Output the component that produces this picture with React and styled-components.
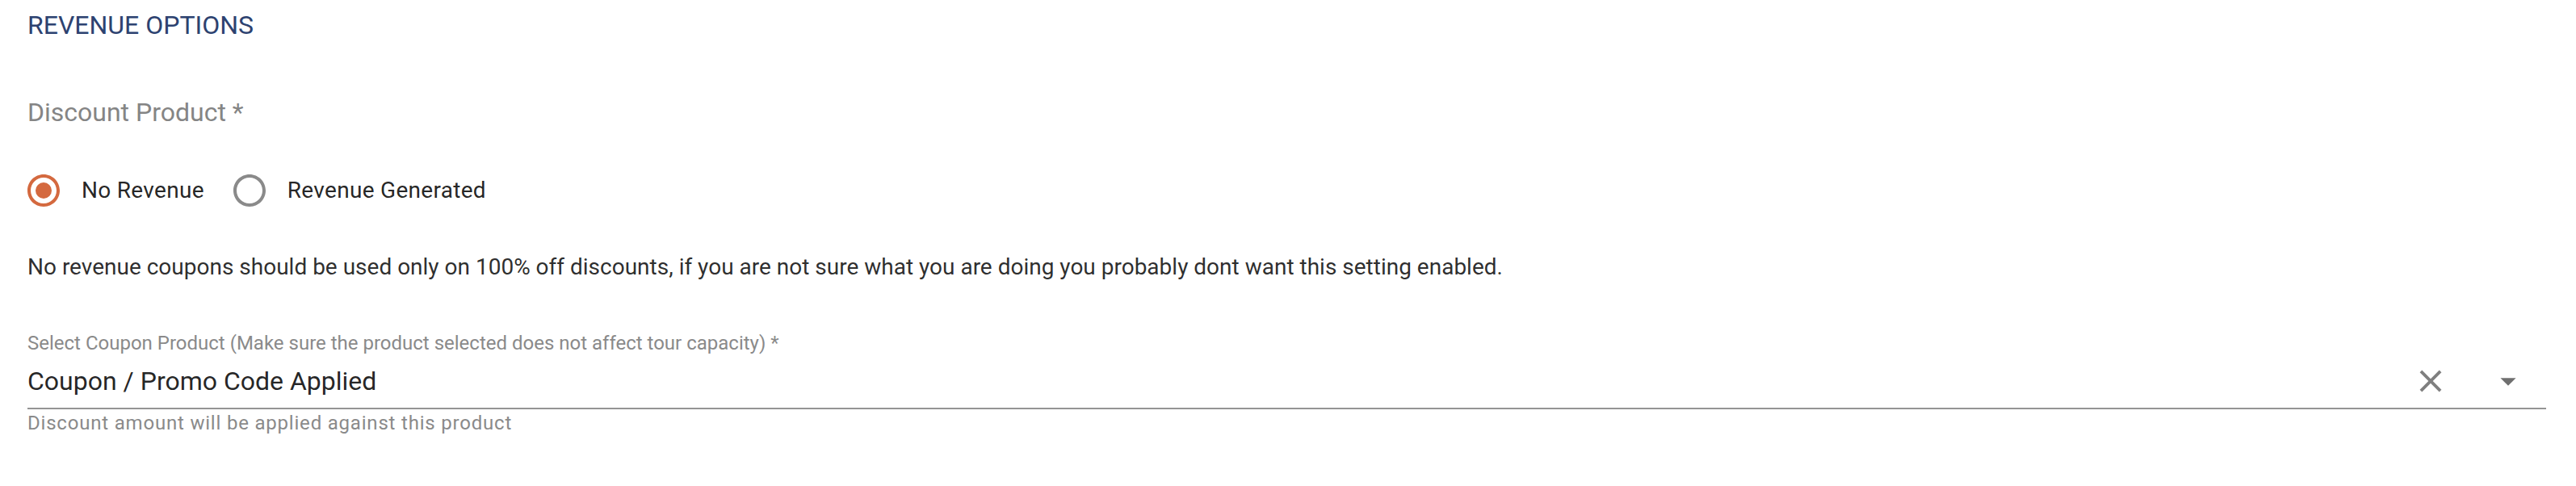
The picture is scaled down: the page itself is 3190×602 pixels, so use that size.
import React, { useState } from "react";
import styled, { createGlobalStyle } from "styled-components";

const GlobalStyle = createGlobalStyle`
  html, body {
    margin: 0;
    padding: 0;
    background: #ffffff;
  }
  body {
    font-family: Roboto, "Liberation Sans", Arial, sans-serif;
    -webkit-font-smoothing: antialiased;
  }
`;

const options = [
  { value: "none", label: "No Revenue" },
  { value: "generated", label: "Revenue Generated" },
];

const RadioIcon = ({ checked }) => (
  <svg width="48" height="48" viewBox="0 0 24 24" fill="currentColor">
    <path d="M12 2C6.48 2 2 6.48 2 12s4.48 10 10 10 10-4.48 10-10S17.52 2 12 2zm0 18c-4.42 0-8-3.58-8-8s3.58-8 8-8 8 3.58 8 8-3.58 8-8 8z" />
    {checked && <circle cx="12" cy="12" r="5" />}
  </svg>
);

const CloseIcon = () => (
  <svg width="46" height="46" viewBox="0 0 24 24" fill="currentColor">
    <path d="M19 6.41L17.59 5 12 10.59 6.41 5 5 6.41 10.59 12 5 17.59 6.41 19 12 13.41 17.59 19 19 17.59 13.41 12z" />
  </svg>
);

const ArrowDropDown = () => (
  <svg width="46" height="46" viewBox="0 0 24 24" fill="currentColor">
    <path d="M7 10l5 5 5-5z" />
  </svg>
);

const App = () => {
  const [revenue, setRevenue] = useState("none");

  return (
    <>
      <GlobalStyle />
      <Page>
        <SectionTitle>REVENUE OPTIONS</SectionTitle>
        <FieldLabel>Discount Product *</FieldLabel>
        <RadioGroup>
          {options.map((opt) => (
            <RadioOption key={opt.value} onClick={() => setRevenue(opt.value)}>
              <RadioBox checked={revenue === opt.value}>
                <RadioIcon checked={revenue === opt.value} />
              </RadioBox>
              <RadioText>{opt.label}</RadioText>
            </RadioOption>
          ))}
        </RadioGroup>
        <Note>
          No revenue coupons should be used only on 100% off discounts, if you
          are not sure what you are doing you probably dont want this setting
          enabled.
        </Note>
        <SelectField>
          <SelectLabel>
            Select Coupon Product (Make sure the product selected does not
            affect tour capacity) *
          </SelectLabel>
          <InputRow>
            <Value>Coupon / Promo Code Applied</Value>
            <Adornments>
              <IconButton>
                <CloseIcon />
              </IconButton>
              <IconButton dark>
                <ArrowDropDown />
              </IconButton>
            </Adornments>
          </InputRow>
          <Helper>Discount amount will be applied against this product</Helper>
        </SelectField>
      </Page>
    </>
  );
};

const Page = styled.div`
  width: 3190px;
  height: 602px;
  box-sizing: border-box;
  padding: 7px 37px 0 34px;
  background: #ffffff;
  overflow: hidden;
`;
const SectionTitle = styled.h2`
  margin: 0;
  font-size: 32px;
  line-height: 48px;
  font-weight: 400;
  color: #2d4270;
`;
const FieldLabel = styled.div`
  margin-top: 60px;
  font-size: 32px;
  line-height: 48px;
  color: #858585;
`;
const RadioGroup = styled.div`
  display: flex;
  align-items: center;
  margin-top: 31px;
  height: 84px;
`;
const RadioOption = styled.label`
  display: flex;
  align-items: center;
  margin: 0 36px 0 -22px;
  cursor: pointer;
`;
const RadioBox = styled.span`
  width: 84px;
  height: 84px;
  display: flex;
  align-items: center;
  justify-content: center;
  color: ${(p) => (p.checked ? "#d4693f" : "#8a8a8a")};
`;
const RadioText = styled.span`
  padding-left: 5px;
  font-size: 28px;
  line-height: 42px;
  letter-spacing: 0.3px;
  color: rgba(0, 0, 0, 0.87);
`;
const Note = styled.p`
  margin: 32px 0 0;
  font-size: 28px;
  line-height: 42px;
  color: rgba(0, 0, 0, 0.84);
`;
const SelectField = styled.div`
  margin-top: 61px;
  display: flex;
  flex-direction: column;
`;
const SelectLabel = styled.label`
  font-size: 24px;
  line-height: 24px;
  color: #8a8a8a;
`;
const InputRow = styled.div`
  display: flex;
  align-items: center;
  padding: 12px 24px 10px 0;
  border-bottom: 2px solid #949494;
`;
const Value = styled.div`
  flex: 1;
  font-size: 32px;
  line-height: 46px;
  color: rgba(0, 0, 0, 0.87);
`;
const Adornments = styled.div`
  display: flex;
  align-items: center;
  gap: 50px;
`;
const IconButton = styled.span`
  display: flex;
  width: 46px;
  height: 46px;
  color: ${(p) => (p.dark ? "#6f6f6f" : "#7f7f7f")};
`;
const Helper = styled.div`
  margin-top: 5px;
  font-size: 24px;
  line-height: 24px;
  letter-spacing: 0.8px;
  color: #8a8a8a;
`;

export default App;
